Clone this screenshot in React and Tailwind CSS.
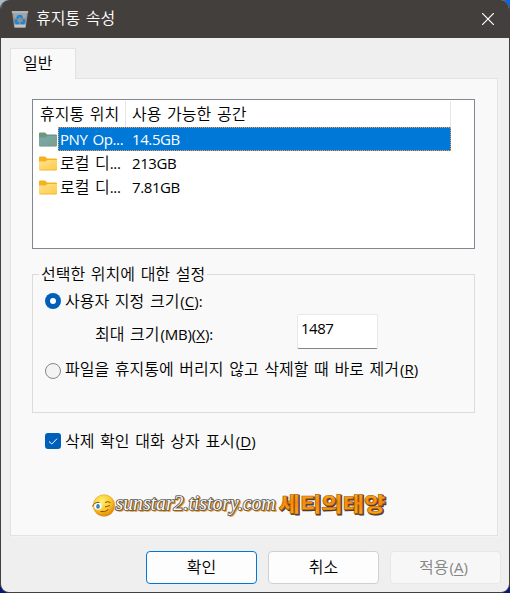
import { useState } from 'react'

const drives = [
  { id: 1, name: 'PNY Op...', space: '14.5GB' },
  { id: 2, ko: '로컬 디', name: '...', space: '213GB' },
  { id: 3, ko: '로컬 디', name: '...', space: '7.81GB' },
]

function Latin({ children }) {
  return <span className="text-[15px] font-normal tracking-[-0.4px]">{children}</span>
}

function Key({ k, end = '' }) {
  return (
    <span className="ml-px text-[15px] font-normal">
      (<span className="underline decoration-1 underline-offset-2">{k}</span>){end}
    </span>
  )
}

function BinIcon() {
  return (
    <svg width="18" height="18" viewBox="0 0 18 18">
      <path d="M1 2 17 2 14.8 17.5 3.2 17.5Z" fill="#8e9193" />
      <path d="M2 2.5 16 2.5 15.2 8 2.8 8Z" fill="#a2a5a7" />
      <path d="M3.4 14.5 14.7 14.5 14.2 17.5 3.8 17.5Z" fill="#c3c4c5" />
      <path d="M.8 1.2H17.2V2.6H.8Z" fill="#d5d6d7" />
      <g fill="none" stroke="#1686dd" strokeWidth="2.3">
        <path d="M6 8.6 7.5 6.2h2.4l1.3 2" />
        <path d="M12.2 9.2l1 2.2-1 1.8H9.7" />
        <path d="M8 13.2H5.7l-1-1.8 1-2" />
      </g>
    </svg>
  )
}

function FolderIcon({ selected }) {
  return (
    <svg width="18" height="15" viewBox="0 0 18 15">
      <path d="M0 1.5Q0 .5 1 .5H6L8 2.5H17Q18 2.5 18 3.5V8H0Z" fill={selected ? '#6f957e' : '#f5b21c'} />
      <path d="M0 5.5H6.5L8.5 4H18V13Q18 14.3 17 14.3H1Q0 14.3 0 13Z" fill={selected ? 'url(#folderSel)' : 'url(#folder)'} />
      <path d="M.5 14H17.5" stroke={selected ? '#65978b' : '#edb53a'} strokeWidth=".8" />
      <defs>
        <linearGradient id="folder" x1="0" y1="0" x2="1" y2="1">
          <stop stopColor="#ffe394" />
          <stop offset="1" stopColor="#ffca42" />
        </linearGradient>
        <linearGradient id="folderSel" x1="0" y1="0" x2="1" y2="1">
          <stop stopColor="#7aaab4" />
          <stop offset="1" stopColor="#7b9f86" />
        </linearGradient>
      </defs>
    </svg>
  )
}

function Signature() {
  return (
    <svg width="304" height="44" viewBox="0 -7 304 44">
      <defs>
        <radialGradient id="face" cx=".4" cy=".3" r=".75">
          <stop stopColor="#fff176" />
          <stop offset=".55" stopColor="#fcc92b" />
          <stop offset="1" stopColor="#db7b08" />
        </radialGradient>
        <linearGradient id="gold" x1="0" y1="0" x2="0" y2="1">
          <stop stopColor="#ffc21c" />
          <stop offset=".5" stopColor="#f58a0b" />
          <stop offset="1" stopColor="#ffaf16" />
        </linearGradient>
      </defs>
      <circle cx="14" cy="15.5" r="10.8" fill="url(#face)" stroke="#d99a20" strokeWidth=".5" />
      <ellipse cx="8" cy="16" rx="3.8" ry="3.8" fill="#fff" />
      <ellipse cx="8" cy="16.4" rx="1.8" ry="2.4" fill="#258abf" />
      <path d="M2.5 16.5Q4 12 9.5 12.4M15 12.5q3-1.8 5.5.2M15 17l5-1.5M10.5 21.5q4.5 1.2 8-2" fill="none" stroke="#8a5015" strokeWidth="1" />
      <g fontFamily="'Liberation Serif', serif" fontSize="20" fontStyle="italic">
        <text x="27" y="21" textLength="160" lengthAdjust="spacingAndGlyphs" fill="#ed951f" stroke="#ed951f" strokeWidth="1.4">sunstar2.tistory.com</text>
        <text x="25.5" y="19.5" textLength="160" lengthAdjust="spacingAndGlyphs" fill="#fafafa" stroke="#555" strokeWidth="1.7" paintOrder="stroke">sunstar2.tistory.com</text>
      </g>
      <g fontFamily="'Noto Sans CJK KR', sans-serif" fontSize="20.5" fontWeight="900">
        <text x="189.5" y="22.5" textLength="107" lengthAdjust="spacingAndGlyphs" fill="#4b3a30" stroke="#4b3a30" strokeWidth="1">세티의태양</text>
        <text x="188.5" y="21.5" textLength="107" lengthAdjust="spacingAndGlyphs" fill="url(#gold)" stroke="#ad560a" strokeWidth=".5">세티의태양</text>
      </g>
    </svg>
  )
}

export default function App() {
  const [selected, setSelected] = useState(1)
  const [mode, setMode] = useState('custom')
  const [confirm, setConfirm] = useState(true)
  const [size, setSize] = useState('1487')

  return (
    <div className="h-[593px] w-[510px] bg-[linear-gradient(90deg,#a9bac5_50%,#0864e8_50%)]">
      <div className="h-full w-full bg-[linear-gradient(transparent_50%,#06177c_50%)]">
        <div className="flex h-full w-full flex-col overflow-hidden rounded-[9px] border-x border-b border-[#433f3c] bg-[#efefef] font-['Open_Sans','Noto_Sans_CJK_KR',sans-serif] text-[16px] leading-6 font-[350] whitespace-nowrap text-black [word-spacing:1.5px]">
          {/* title bar */}
          <header className="flex h-[38px] shrink-0 items-center justify-between bg-[#433f3c] pr-[15px] pl-[10px] text-white">
            <div className="flex items-center gap-[7px]">
              <BinIcon />
              <h1 className="pb-[2px] text-[16px] font-[350]">휴지통 속성</h1>
            </div>
            <button aria-label="닫기">
              <svg width="12" height="12" viewBox="0 0 12 12" stroke="#fff" strokeWidth="1.2">
                <path d="M0 0 12 12M12 0 0 12" />
              </svg>
            </button>
          </header>

          {/* tab + panel */}
          <div className="px-[9px] pt-[10px]">
            <div className="relative z-10 -mb-px h-[31px] w-[66px] border border-b-0 border-[#e2e2e2] bg-[#f9f9f9] pt-[2px] pl-[12px]">일반</div>
            <main className="flex h-[458px] w-[488px] flex-col border border-[#e2e2e2] bg-[#f9f9f9] px-[21px] pt-[20px] shadow-[2px_1px_0_#f3f3f3]">
              <div className="h-[150px] w-[443px] shrink-0 border border-[#828790] bg-white pt-px pl-[6px]">
                <div className="flex h-[26px] w-[412px] border-r border-[#e5e5e5] leading-[26px]">
                  <div className="w-[87px] border-r border-[#e5e5e5] pl-px">휴지통 위치</div>
                  <div className="pl-[6px]">사용 가능한 공간</div>
                </div>
                {drives.map((d) => (
                  <div key={d.id} onClick={() => setSelected(d.id)} className="flex h-6 w-[412px] items-center">
                    <FolderIcon selected={d.id === selected} />
                    <div
                      className={
                        d.id === selected
                          ? 'ml-px flex h-6 flex-1 items-center border border-dotted border-[#ff9a3c] bg-[#0078d7] pl-px text-white'
                          : 'ml-px flex h-6 flex-1 items-center border border-transparent pl-px'
                      }
                    >
                      <div className="w-[72px]">
                        {d.ko}
                        <Latin>{d.name}</Latin>
                      </div>
                      <div><Latin>{d.space}</Latin></div>
                    </div>
                  </div>
                ))}
              </div>

              <fieldset className="mt-[14px] h-[150px] w-[443px] shrink-0 border border-[#dcdcdc] pl-[6px]">
                <legend className="h-[23px] px-[2px] leading-[22px]">선택한 위치에 대한 설정</legend>
                <label className="mt-[3px] flex h-6 items-center gap-1 pl-[6px]">
                  <input type="radio" className="sr-only" checked={mode === 'custom'} onChange={() => setMode('custom')} />
                  <Radio on={mode === 'custom'} />
                  <span>사용자 지정 크기<Key k="C" end=":" /></span>
                </label>
                <div className="flex h-[43px] items-start pt-px">
                  <div className="w-[258px] pt-[8px] pl-[56px]">
                    최대 크기<span className="ml-px text-[15px] font-normal tracking-[-0.2px]">(MB)</span><span className="-ml-px"><Key k="X" end=":" /></span>
                  </div>
                  <input
                    value={size}
                    onChange={(e) => setSize(e.target.value)}
                    className="h-[35px] w-[81px] rounded-[2px] border border-[#e8e8e8] border-b-[#868686] bg-white pb-[8px] pl-[3px] text-[15px] font-normal tracking-[-0.5px]"
                  />
                </div>
                <label className="mt-[2px] flex h-6 items-center gap-1 pl-[6px]">
                  <input type="radio" className="sr-only" checked={mode === 'remove'} onChange={() => setMode('remove')} />
                  <span className="pt-[2px]"><Radio on={mode === 'remove'} /></span>
                  <span className="pb-[2px]">파일을 휴지통에 버리지 않고 삭제할 때 바로 제거<Key k="R" /></span>
                </label>
              </fieldset>

              <label className="mt-[16px] flex h-6 items-center gap-1 pl-[13px]">
                <input type="checkbox" className="sr-only" checked={confirm} onChange={() => setConfirm(!confirm)} />
                <svg width="16" height="16" viewBox="0 0 16 16">
                  <rect width="16" height="16" rx="3" fill={confirm ? '#005fb8' : '#f3f3f3'} />
                  {confirm && <path d="M4 8.5 6.8 11 12 5.7" fill="none" stroke="#fff" strokeWidth="1" />}
                </svg>
                <span>삭제 확인 대화 상자 표시<Key k="D" /></span>
              </label>
              <div className="mt-[30px] ml-[58px]">
                <Signature />
              </div>
            </main>
          </div>

          {/* dialog buttons */}
          <footer className="mt-[15px] flex justify-end gap-[11px] pr-[8px]">
            <button className="h-[33px] w-[111px] rounded-[4px] border border-[#0078d4] bg-[#fdfdfd] pb-[2px]">확인</button>
            <button className="h-[33px] w-[111px] rounded-[4px] border border-[#d0d0d0] bg-[#fdfdfd] pb-[2px]">취소</button>
            <button disabled className="h-[33px] w-[111px] rounded-[4px] border border-[#e7e7e7] bg-[#f7f7f7] pr-[4px] pb-[2px] text-[#858585]">
              적용<Key k="A" />
            </button>
          </footer>
        </div>
      </div>
    </div>
  )
}

function Radio({ on }) {
  return (
    <svg width="16" height="16" viewBox="0 0 16 16" className="shrink-0">
      {on ? (
        <>
          <circle cx="8" cy="8" r="8" fill="#005fb8" />
          <circle cx="8" cy="8" r="3" fill="#fff" />
        </>
      ) : (
        <circle cx="8" cy="8" r="7.5" fill="#f3f3f3" stroke="#858585" />
      )}
    </svg>
  )
}
